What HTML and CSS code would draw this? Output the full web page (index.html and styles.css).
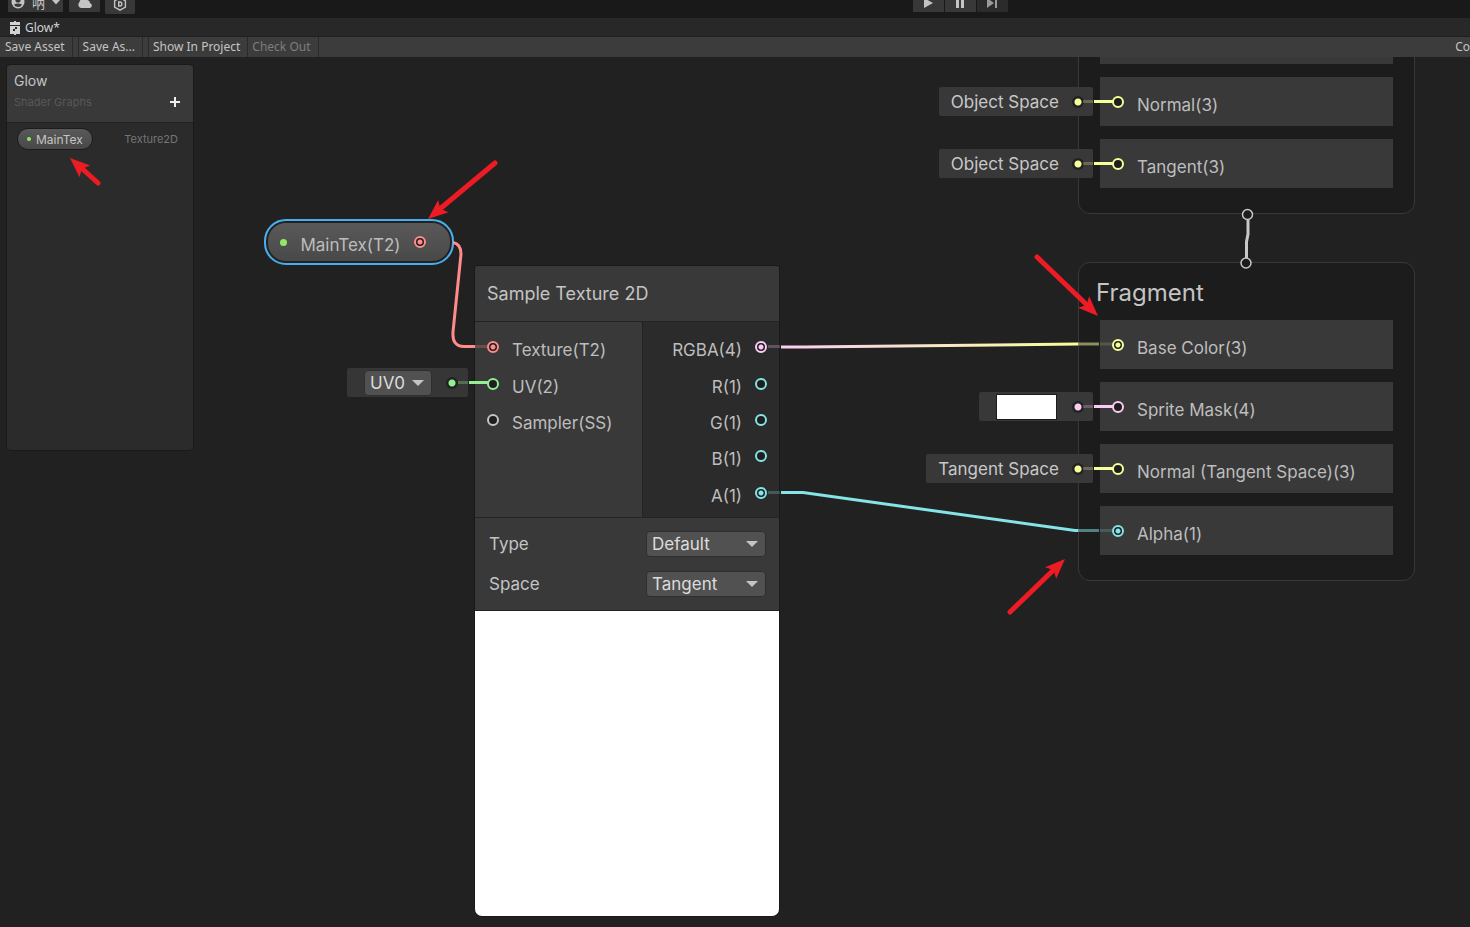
FILE: index.html
```html
<!DOCTYPE html>
<html lang="en">
<head>
<meta charset="utf-8">
<title>Glow - Shader Graph</title>
<link rel="stylesheet" href="styles.css">
</head>
<body>
<div class="app">
  <header class="topbar">
    <button class="top-btn account" aria-label="Account">
      <svg width="14" height="14" viewBox="0 0 14 14"><circle cx="7" cy="7" r="6.5" fill="#c4c4c4"/><circle cx="7" cy="5" r="2.6" fill="#383838"/><path d="M3 9.500Q7 7.500 11 9.500Q10 12 7 12Q4 12 3 9.500Z" fill="#383838"/></svg>
      <span>呐</span>
      <svg width="8" height="14" viewBox="0 0 8 14"><path d="M0 5H8L4 9.500Z" fill="#c4c4c4"/></svg>
    </button>
    <button class="top-btn cloud" aria-label="Cloud">
      <svg width="16" height="14" viewBox="0 0 16 14"><path d="M4 13A3.500 3.500 0 0 1 2.500 7A4.500 4.500 0 0 1 10.500 5A3.500 3.500 0 0 1 13 8A2.600 2.600 0 0 1 13 13Z" fill="#c4c4c4"/></svg>
    </button>
    <button class="top-btn services" aria-label="Services">
      <svg width="14" height="16" viewBox="0 0 14 16" fill="none" stroke="#c4c4c4" stroke-width="1.400"><path d="M7 2.800L12.400 5.800V12.200L7 15.200L1.600 12.200V5.800Z"/><path d="M5.700 7H7Q8.800 7 8.800 9Q8.800 11 7 11H5.700Z"/></svg>
    </button>
    <div class="playback">
      <button class="top-btn" aria-label="Play"><svg width="10" height="12" viewBox="0 0 10 12"><path d="M0 2L9 7L0 12Z" fill="#c4c4c4"/></svg></button>
      <button class="top-btn" aria-label="Pause"><svg width="10" height="12" viewBox="0 0 10 12"><path d="M0 2H3V12H0ZM5 2H8V12H5Z" fill="#c4c4c4"/></svg></button>
      <button class="top-btn step" aria-label="Step"><svg width="12" height="12" viewBox="0 0 12 12"><path d="M0 2L7 7L0 12ZM8 2H10V12H8Z" fill="#999"/></svg></button>
    </div>
  </header>

  <nav class="tabs">
    <a class="tab" href="#graph">
      <svg width="10" height="14" viewBox="0 0 10 14"><path d="M4 0H6V1H10V4H0V1H4ZM0 5H10V13H6V14H4V13H0Z" fill="#d2d2d2"/><path d="M5 6H7V8H5V10H3V8H5Z" fill="#282828"/></svg>
      <span>Glow*</span>
    </a>
  </nav>

  <div class="toolbar">
    <button>Save Asset</button>
    <i class="gap"></i>
    <button>Save As...</button>
    <i class="gap"></i>
    <button>Show In Project</button>
    <button disabled>Check Out</button>
    <span class="toolbar-end">Co</span>
  </div>

  <main class="canvas" id="graph">
    <section class="blackboard">
      <header class="board-head">
        <h1>Glow</h1>
        <div class="board-sub"><span>Shader Graphs</span>
          <button class="add" aria-label="Add property"><svg width="10" height="10" viewBox="0 0 10 10"><path d="M5 0V10M0 5H10" stroke="#eee" stroke-width="2"/></svg></button>
        </div>
      </header>
      <div class="property">
        <button class="pill"><i></i>MainTex</button>
        <span>Texture2D</span>
      </div>
    </section>

    <section class="context vertex">
      <div class="block"></div>
      <div class="block"><div class="slot">Object Space<i class="dot yellow"></i></div><i class="port yellow"></i><span>Normal(3)</span></div>
      <div class="block"><div class="slot">Object Space<i class="dot yellow"></i></div><i class="port yellow"></i><span>Tangent(3)</span></div>
    </section>

    <section class="context fragment">
      <h2>Fragment</h2>
      <div class="block"><i class="port yellow on"></i><span>Base Color(3)</span></div>
      <div class="block"><div class="slot color-slot"><button class="swatch" aria-label="Sprite mask color"></button><i class="dot pink"></i></div><i class="port pink"></i><span>Sprite Mask(4)</span></div>
      <div class="block"><div class="slot">Tangent Space<i class="dot yellow"></i></div><i class="port yellow"></i><span>Normal (Tangent Space)(3)</span></div>
      <div class="block"><i class="port cyan on"></i><span>Alpha(1)</span></div>
    </section>

    <div class="token"><i class="token-dot"></i><span>MainTex(T2)</span><i class="port red on"></i></div>

    <div class="uv-slot">
      <span class="select"><select aria-label="UV channel"><option>UV0</option></select></span>
      <i class="dot green"></i>
    </div>

    <section class="node">
      <h2>Sample Texture 2D</h2>
      <div class="ports">
        <div class="inputs">
          <div class="row"><i class="port red on"></i><span>Texture(T2)</span></div>
          <div class="row"><i class="port green"></i><span>UV(2)</span></div>
          <div class="row"><i class="port grey"></i><span>Sampler(SS)</span></div>
        </div>
        <div class="outputs">
          <div class="row"><span>RGBA(4)</span><i class="port pink on"></i></div>
          <div class="row"><span>R(1)</span><i class="port cyan"></i></div>
          <div class="row"><span>G(1)</span><i class="port cyan"></i></div>
          <div class="row"><span>B(1)</span><i class="port cyan"></i></div>
          <div class="row"><span>A(1)</span><i class="port cyan on"></i></div>
        </div>
      </div>
      <div class="controls">
        <label for="type">Type</label>
        <span class="select"><select id="type"><option>Default</option></select></span>
        <label for="space">Space</label>
        <span class="select"><select id="space"><option>Tangent</option></select></span>
      </div>
      <div class="preview"></div>
    </section>

    <svg class="wires" width="100%" height="100%" fill="none">
      <defs>
        <linearGradient id="rgba" gradientUnits="userSpaceOnUse" x1="780" y1="0" x2="1078" y2="0"><stop offset="0" stop-color="#fbcbf4"/><stop offset="1" stop-color="#f6ff9a"/></linearGradient>
        <path id="head" d="M0 0L-20 -8L-16 0L-20 8Z" fill="#ed1c24"/>
      </defs>
      <g transform="translate(0 -57)" stroke-width="3">
        <path d="M453 242.500Q461 244 461 254L453 332Q452 346.500 464 346.500H475" stroke="#ff8b8b"/>
        <path d="M475 346.500H487" stroke="#ff8b8b" opacity=".25"/>
        <path d="M458 382.500H468" stroke="#94ef92" opacity=".3"/>
        <path d="M469 382.500H488" stroke="#94ef92"/>
        <path d="M768 346.500H780" stroke="#fbcbf4" opacity=".25"/>
        <path d="M781 347H805L1078 344" stroke="url(#rgba)"/>
        <path d="M1078 344H1099" stroke="#f6ff9a" opacity=".5"/>
        <path d="M1100 344H1112" stroke="#f6ff9a" opacity=".15"/>
        <path d="M768 492.500H780" stroke="#84e4e7" opacity=".25"/>
        <path d="M781 492.500H803L1075 530.500H1078" stroke="#84e4e7"/>
        <path d="M1078 530.500H1099" stroke="#84e4e7" opacity=".5"/>
        <path d="M1100 530.500H1112" stroke="#84e4e7" opacity=".2"/>
        <g stroke="#f6ff9a"><path d="M1083 101.500H1093M1083 163.500H1093M1083 468.500H1093" opacity=".25"/><path d="M1094 101.500H1113M1094 163.500H1113M1094 468.500H1113"/></g>
        <g stroke="#fbcbf4"><path d="M1083 406.500H1093" opacity=".25"/><path d="M1094 406.500H1113"/></g>
        <g stroke="#c8c8c8"><path d="M1248 220V234L1246.500 242V258"/><circle cx="1247.500" cy="214.500" r="5" stroke-width="1.500" fill="#1c1c1c"/><circle cx="1246" cy="263" r="5" stroke-width="1.500" fill="#1c1c1c"/></g>
        <g stroke="#ed1c24" stroke-width="5" stroke-linecap="round"><path d="M98 183L82 168.500M495 163L441 208M1037 257L1087 305M1010 612L1054 569.500"/></g>
        <g stroke="none"><use href="#head" transform="translate(70 158) rotate(222)"/><use href="#head" transform="translate(428 219) rotate(140)"/><use href="#head" transform="translate(1098 316) rotate(44)"/><use href="#head" transform="translate(1065 559) rotate(-44)"/></g>
      </g>
    </svg>
  </main>
</div>
</body>
</html>
```
FILE: styles.css
```css
* { box-sizing: border-box; }
body { margin: 0; background: #212121; color: #c4c4c4; font-family: Inter, sans-serif; }
button, select { font: inherit; color: inherit; border: 0; margin: 0; padding: 0; }
h1, h2 { margin: 0; font-weight: 400; }
i { display: block; flex: none; }
svg { display: block; flex: none; }
.app { display: flex; flex-direction: column; height: 100vh; overflow: hidden; }

.topbar { display: flex; align-items: flex-end; height: 18px; padding: 0 0 6px 8px; background: #191919; flex: none; font: 13px "Noto Sans", "Noto Sans CJK SC", sans-serif; }
.top-btn { display: flex; align-items: center; justify-content: center; height: 20px; background: #383838; }
.account { width: 55px; gap: 7px; margin-right: 6px; }
.cloud { width: 31px; margin-right: 5px; }
.services { width: 30px; height: 22px; margin-bottom: -2px; border-radius: 0 0 2px 2px; }
.playback { display: flex; gap: 1px; margin-left: 778px; }
.playback .top-btn { width: 31px; }
.playback .step { background: #2b2b2b; }

.tabs { height: 19px; flex: none; background: #282828; border-bottom: 1px solid #202020; font: 12px/18px "Noto Sans", sans-serif; }
.tab { display: inline-flex; align-items: center; gap: 5px; height: 20px; padding-left: 10px; color: #d2d2d2; text-decoration: none; }

.toolbar { display: flex; flex: none; height: 20px; padding-left: 1px; background: #3c3c3c; font: 12px/18px "Noto Sans", sans-serif; white-space: nowrap; }
.toolbar button { background: none; padding: 0 7px 0 4px; border-right: 1px solid #2a2a2a; }
.toolbar button:disabled { color: #7c7c7c; }
.gap { width: 6px; border-right: 1px solid #2a2a2a; }
.toolbar-end { margin-left: auto; padding-top: 1px; }

.canvas { position: relative; flex: 1; overflow: hidden; font-size: 17px; }
.wires { position: absolute; inset: 0; pointer-events: none; }

.blackboard { position: absolute; left: 6px; top: 7px; width: 188px; height: 387px; background: #2b2b2b; border: 1px solid #191919; border-radius: 5px; overflow: hidden; }
.board-head { height: 58px; padding: 6px 13px 0 7px; background: #393939; border-bottom: 1px solid #212121; }
.board-head h1 { font-size: 14px; line-height: 19px; }
.board-sub { display: flex; justify-content: space-between; align-items: center; height: 24px; font-size: 11px; color: #585858; }
.add { background: none; }
.property { display: flex; justify-content: space-between; align-items: center; padding: 5px 15px 0 10px; font-size: 11px; color: #757575; }
.pill { display: flex; align-items: center; gap: 5px; height: 22px; padding: 0 9px; border: 1px solid #1c1c1c; border-radius: 11px; background: linear-gradient(#595959, #484848); color: #c4c4c4; font-size: 12px; }
.pill i { width: 4px; height: 4px; border-radius: 50%; background: #93e863; }

.port { width: 12px; height: 12px; border: 2px solid; border-radius: 50%; background: #1e1e1e; }
.port.on { background: radial-gradient(circle, currentColor 2px, #1e1e1e 3px); }
.yellow { color: #f6ff9a; }
.pink { color: #fbcbf4; }
.cyan { color: #84e4e7; }
.red { color: #ff8b8b; }
.green { color: #94ef92; }
.grey { color: #c4c4c4; }
.dot { width: 12px; height: 12px; border-radius: 50%; background: radial-gradient(circle, currentColor 3px, #212121 4px); }

.context { position: absolute; left: 1078px; width: 337px; padding: 13px 21px 25px; display: flex; flex-direction: column; gap: 13px; background: #1c1c1c; border: 1px solid #383838; border-radius: 12px; }
.context h2 { height: 31px; margin: 0 -4px; font-size: 24px; line-height: 34px; }
.vertex { top: -56px; }
.fragment { top: 205px; }
.block { position: relative; display: flex; align-items: center; gap: 13px; height: 49px; padding-left: 12px; background: #393939; color: #bdbdbd; }
.block > span { padding-top: 6px; }
.slot { position: absolute; right: calc(100% + 7px); display: flex; align-items: center; gap: 13px; height: 29px; padding: 0 9px 0 12px; background: #383838; border-radius: 2px; color: #c8c8c8; white-space: nowrap; }
.color-slot { padding-left: 17px; gap: 15px; }
.swatch { width: 61px; height: 26px; background: #fff; border: 1px solid #1c1c1c; }

.token { position: absolute; left: 264px; top: 162px; width: 190px; height: 46px; display: flex; align-items: center; padding: 0 26px 0 14px; border: 2px solid #44b0f0; border-radius: 22px; background: linear-gradient(#5a5a5a, #484848); box-shadow: inset 0 0 0 2px #222; color: #bdbdbd; }
.token span { margin: 6px auto 0; }
.token-dot { width: 7px; height: 7px; border-radius: 50%; background: #93e863; }

.select { position: relative; display: block; }
.select::after { content: ""; position: absolute; right: 8px; top: 10px; border: 6px solid transparent; border-top-color: #c4c4c4; border-bottom: 0; pointer-events: none; }
.select select { display: block; appearance: none; width: 100%; height: 26px; padding: 0 5px; border: 1px solid #2e2e2e; border-radius: 4px; background: #515151; color: #dcdcdc; font-size: 17px; }
.uv-slot { position: absolute; left: 347px; top: 311px; width: 121px; height: 29px; display: flex; align-items: center; justify-content: space-between; padding: 0 10px 0 17px; background: #363636; border-radius: 2px; }
.uv-slot .select { width: 68px; }

.node { position: absolute; left: 474px; top: 208px; width: 306px; background: #393939; border: 1px solid #191919; border-radius: 3px 3px 8px 8px; overflow: hidden; }
.node h2 { height: 56px; padding-left: 12px; font-size: 18px; line-height: 56px; border-bottom: 1px solid #232323; }
.ports { display: grid; grid-template-columns: 168px 1fr; height: 196px; border-bottom: 1px solid #232323; color: #bdbdbd; }
.inputs, .outputs { display: grid; grid-template-rows: repeat(5, 1fr); padding: 7px 12px 6px; }
.inputs { border-right: 1px solid #232323; }
.outputs { background: #2b2b2b; }
.row { display: flex; align-items: center; gap: 13px; }
.row span { padding-top: 6px; }
.outputs .row { justify-content: flex-end; }
.controls { display: grid; grid-template-columns: 1fr 120px; row-gap: 14px; align-items: center; padding: 13px 13px 13px 14px; border-bottom: 1px solid #232323; }
.preview { height: 305px; background: #fff; }
```
